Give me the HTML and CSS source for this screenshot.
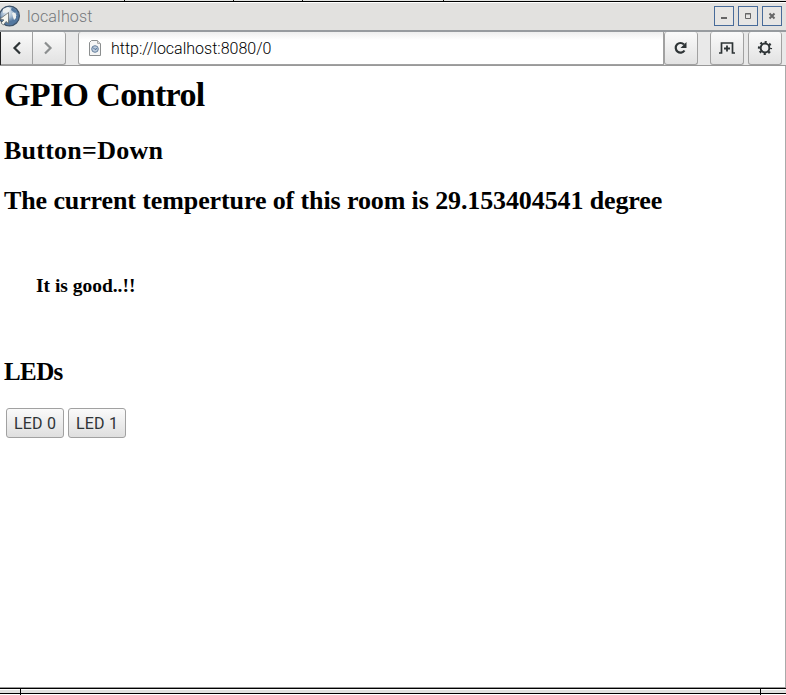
FILE: index.html
```html
<!DOCTYPE html>
<html lang="en">
<head>
<meta charset="utf-8">
<title>localhost</title>
<link rel="stylesheet" href="styles.css">
</head>
<body>
<div class="desktop-edge"><i class="tick t1"></i><i class="tick t2"></i><i class="tick t3"></i><i class="tick t4"></i></div>
<header class="titlebar">
  <svg class="globe" width="22" height="24" viewBox="0 0 22 24">
    <defs><radialGradient id="g" cx=".4" cy=".3"><stop offset="0" stop-color="#eef3f7"/><stop offset=".6" stop-color="#a3b9d0"/><stop offset="1" stop-color="#54779f"/></radialGradient></defs>
    <circle cx="9.500" cy="12" r="9.900" fill="url(#g)" stroke="#3d5269" stroke-width="1.200"/>
    <path d="M3 5l5-2 3 2-3 3-5 1zM12 9l3-1 2 5-3 3-1-3z" fill="#edf0f0"/>
    <path d="M12 3l5 4-2 2-4-3zM12 17l4 0-3 3-2-1zM16 12l2-1v3l-2 2z" fill="#5478a0"/>
    <path d="M8.500 8.500v11L6 17.500 3.500 21 1 19l3-3-4-1z" fill="#f5f5ef" stroke="#666b6c" stroke-width=".8"/>
  </svg>
  <span class="title">localhost</span>
  <div class="window-buttons">
    <span class="wb"><svg width="18" height="18"><path d="M6 11h6" stroke="#666" stroke-width="2"/></svg></span>
    <span class="wb"><svg width="18" height="18"><path d="M6.500 6.500h5v5h-5zM6 7h6" fill="none" stroke="#666"/></svg></span>
    <span class="wb"><svg width="18" height="18"><path d="M6.500 6.500l5 5M11.500 6.500l-5 5" stroke="#666" stroke-width="2"/></svg></span>
  </div>
</header>
<nav class="toolbar">
  <div class="nav-group">
    <button class="tool back" aria-label="Back"><svg width="20" height="20"><path d="M13 4.500L7.500 10l5.500 5.500" fill="none" stroke="#2e3436" stroke-width="2.200"/></svg></button>
    <button class="tool forward" aria-label="Forward"><svg width="20" height="20"><path d="M7 4.500l5.500 5.500L7 15.500" fill="none" stroke="#8b8e8f" stroke-width="2.200"/></svg></button>
  </div>
  <div class="address">
    <svg width="14" height="16"><path d="M3.500.500h6l3 3v12h-11v-13z" fill="#f5f5f5" stroke="#8b8e8f"/><path d="M9.500.5v3h3" fill="#ddd" stroke="#aaa"/><circle cx="7" cy="9" r="3.300" fill="#bccbdc" stroke="#67809d"/><path d="M5 7.500l2 2 2-1" fill="none" stroke="#486991"/></svg>
    <span>http://localhost:8080/0</span>
  </div>
  <button class="tool reload" aria-label="Reload"><svg width="20" height="20"><path d="M13 6.500A4.800 4.800 0 1 0 13.500 12.500" fill="none" stroke="#2e3436" stroke-width="2.200"/><path d="M15.500 4v6h-6z" fill="#2e3436"/></svg></button>
  <button class="tool tab" aria-label="New tab"><svg width="20" height="20"><path d="M2 15h2.500V5h11v10H18" fill="none" stroke="#2e3436" stroke-width="1.700"/><path d="M7 10.500h6M10 7.500v6" stroke="#2e3436" stroke-width="1.800"/></svg></button>
  <button class="tool menu" aria-label="Settings"><svg width="20" height="20"><circle cx="10" cy="10" r="4.400" fill="none" stroke="#2e3436" stroke-width="2"/><circle cx="10" cy="10" r="6" fill="none" stroke="#2e3436" stroke-width="2.200" stroke-dasharray="2.100 2.612" stroke-dashoffset="1.050"/></svg></button>
</nav>
<main class="page">
  <h1>GPIO Control</h1>
  <h2 class="button-state">Button=Down</h2>
  <h2 class="temperature">The current temperture of this room is 29.153404541 degree</h2>
  <h3>It is good..!!</h3>
  <h2 class="leds">LEDs</h2>
  <div class="led-buttons"><button class="led">LED 0</button><button class="led">LED 1</button></div>
</main>
<footer class="frame"><span class="corner"></span><span class="bar"></span><span class="grip"></span></footer>
</body>
</html>
```
FILE: styles.css
```css
* { box-sizing: border-box; }
body { margin: 0; width: 786px; height: 695px; overflow: hidden; background: #fff; display: flex; flex-direction: column; font-family: Roboto, sans-serif; }
button { font-family: inherit; }
svg { display: block; flex: none; }
.desktop-edge { height: 3px; flex: none; display: flex; background: linear-gradient(#e4e5e3 1px, #000 1px, #000 2px, #fff 2px); }
.tick { width: 1px; height: 1px; background: #111; }
.t1 { margin-left: 124px; }
.t2 { margin-left: 108px; }
.t3 { margin-left: 68px; }
.t4 { margin-left: 140px; }
.titlebar { height: 27px; flex: none; display: flex; align-items: center; background: #e2e1df; padding: 0 4px 1px 0; }
.title { margin-left: 5px; font-size: 16px; font-weight: 300; color: #74777b; letter-spacing: .18px; }
.window-buttons { margin-left: auto; display: flex; gap: 4px; }
.wb { width: 20px; height: 20px; border: 1px solid #486b99; background: #e7e6e4; }
.toolbar { height: 36px; flex: none; display: flex; background: #e9e9e9; border-top: 2px solid #979b9f; border-bottom: 1px solid #999; padding: 0 4px 0 0; }
.nav-group { display: flex; width: 66px; border-left: 1px solid #222; }
.tool { display: flex; align-items: center; justify-content: center; width: 34px; height: 33px; padding: 0; border: 1px solid #a1a1a1; border-top: 0; border-radius: 3px; background: linear-gradient(#fafafa, #e2e2e2); flex: none; }
.back { width: 31px; border-left: 0; border-right: 0; border-radius: 0; }
.forward { width: 34px; border-radius: 0 3px 3px 0; padding-right: 2px; }
.address { margin-left: 12px; width: 586px; display: flex; align-items: center; gap: 9px; padding-left: 9px; border: 1px solid #a1a1a1; border-top: 0; border-radius: 3px 0 0 3px; background: linear-gradient(#eee, #fff 8px); font-size: 16px; color: #000; }
.address span { font-weight: 300; letter-spacing: 0; }
.tab { margin-left: 12px; }
.menu { margin-left: 4px; }
.page { height: 621px; flex: none; padding: 10px 4px 0; border-right: 1px solid #aaa; font-family: "Liberation Serif", serif; color: #000; }
h1, h2, h3 { margin: 0; font-weight: 700; white-space: nowrap; }
h1 { font-size: 34px; line-height: 38px; letter-spacing: -.62px; }
h2 { font-size: 26px; line-height: 30px; letter-spacing: -.11px; }
h3 { font-size: 19.5px; line-height: 24px; margin: 58px 0 0 32px; letter-spacing: -.02px; }
.button-state { margin-top: 22px; letter-spacing: .25px; }
.temperature { margin-top: 20px; }
.leds { margin-top: 59px; font-size: 25px; letter-spacing: -.6px; }
.led-buttons { display: flex; gap: 4px; margin: 21px 0 0 2px; }
.led { width: 58px; height: 30px; padding: 0; border: 1px solid #a1a1a1; border-radius: 3px; background: linear-gradient(#fafafa, #dfdfdf); font-family: Roboto, sans-serif; font-size: 16px; color: #2e3436; letter-spacing: .2px; }
.frame { height: 8px; flex: none; display: flex; background: #e0e1df; border-top: 1px solid #999; padding: 0; }
.frame span { height: 7px; background: linear-gradient(#000 1px, #fff 1px, #fff 2px, #e0e1df 2px, #e0e1df 5px, #000 5px, #000 6px, #fff 6px); }
.corner { width: 21px; border-right: 1px solid #000; }
.bar { width: 740px; border-right: 1px solid #000; }
.grip { width: 25px; }
```
